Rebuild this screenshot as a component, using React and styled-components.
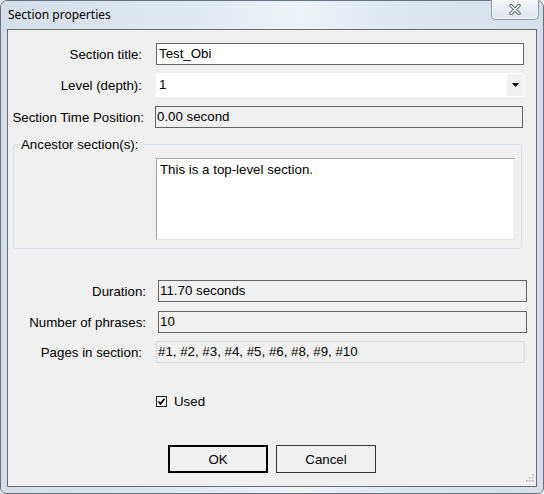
import React from "react";
import styled, { createGlobalStyle } from "styled-components";

const GlobalStyle = createGlobalStyle`
  body {
    margin: 0;
    background: #ffffff;
  }
`;

const Window = styled.div`
  width: 544px;
  height: 494px;
  box-sizing: border-box;
  border: 1px solid #66727e;
  border-radius: 7px 7px 6px 6px;
  background: linear-gradient(90deg, #d3dee9 0%, #e1e9f1 35%, #eef3f8 55%, #dde6ef 75%, #d5e0ea 100%);
  padding: 0 6px 6px;
  display: flex;
  flex-direction: column;
`;

const TitleBar = styled.div`
  height: 28px;
  display: flex;
  justify-content: space-between;
  align-items: flex-start;
  font-family: "Noto Sans", "Liberation Sans", sans-serif;
  font-size: 12px;
  color: #000;
`;

const Title = styled.span`
  margin: 6px 0 0 1px;
  line-height: 16px;
`;

const CloseButton = styled.div`
  width: 48px;
  height: 20px;
  margin: -1px -2px 0 0;
  box-sizing: border-box;
  border: 1px solid #8a99a9;
  border-top: none;
  border-radius: 0 0 5px 5px;
  background: linear-gradient(#f3f6f9, #dfe6ee);
  box-shadow: inset 0 0 0 1px rgba(255, 255, 255, 0.7);
  display: flex;
  align-items: center;
  justify-content: center;
`;

const Client = styled.div`
  flex: 1;
  position: relative;
  border: 1px solid #6b6b6b;
  background: #f0f0f0;
  display: flex;
  flex-direction: column;
  font-family: "Liberation Sans", Arial, sans-serif;
  font-size: 13.3px;
  color: #000;
`;

const Row = styled.div`
  display: grid;
  grid-template-columns: ${(p) => p.$labelW}px auto;
  column-gap: ${(p) => p.$gap}px;
  align-items: center;
  margin-top: ${(p) => p.$top}px;
`;

const Label = styled.span`
  text-align: right;
  white-space: nowrap;
`;

const TextBox = styled.div`
  width: ${(p) => p.$w}px;
  height: 22px;
  box-sizing: border-box;
  border: 1px solid ${(p) => (p.$light ? "#dadada" : "#646464")};
  background: ${(p) => (p.$readonly ? "#f0f0f0" : "#ffffff")};
  padding-left: ${(p) => p.$pad}px;
  line-height: 20px;
  white-space: nowrap;
`;

const Combo = styled.div`
  width: 368px;
  height: 24px;
  box-sizing: border-box;
  border: 1px solid #ffffff;
  background: #ffffff;
  display: flex;
  align-items: stretch;
`;

const ComboText = styled.span`
  flex: 1;
  padding-left: 2px;
  line-height: 22px;
`;

const ComboArrow = styled.div`
  width: 16px;
  background: #f0f0f0;
  display: flex;
  align-items: center;
  justify-content: center;
`;

const Group = styled.fieldset`
  margin: 9px 0 0 5px;
  width: 509px;
  box-sizing: border-box;
  border: 1px solid #d5dfe5;
  border-radius: 3px;
  padding: 0 6px 8px 0;
  min-width: 0;
`;

const Legend = styled.legend`
  margin-left: 6px;
  padding: 0 2px 0 1px;
  line-height: 15px;
`;

const TextArea = styled.div`
  margin: 6px 0 0 142px;
  width: 359px;
  height: 82px;
  box-sizing: border-box;
  border: 1px solid;
  border-color: #a5a5a5 #e2e2e2 #e2e2e2 #a5a5a5;
  background: #ffffff;
  padding: 3px 3px;
  line-height: 15px;
`;

const CheckRow = styled.label`
  display: flex;
  align-items: center;
  gap: 7px;
  margin: 31px 0 0 148px;
  line-height: 15px;
`;

const CheckBox = styled.span`
  width: 11px;
  height: 11px;
  box-sizing: border-box;
  border: 1px solid #222;
  background: #ffffff;
  display: flex;
  align-items: center;
  justify-content: center;
`;

const ButtonRow = styled.div`
  display: flex;
  gap: 8px;
  margin: 36px 0 0 160px;
`;

const Button = styled.div`
  width: 100px;
  height: 28px;
  box-sizing: border-box;
  border: ${(p) => (p.$default ? "2px solid #000" : "1px solid #333")};
  background: #f0f0f0;
  display: flex;
  align-items: center;
  justify-content: center;
`;

const Grip = styled.svg`
  position: absolute;
  right: 2px;
  bottom: 2px;
`;

const CloseIcon = () => (
  <svg width="12" height="11" viewBox="0 0 12 11">
    <path d="M2 1.5 L10 9.5 M10 1.5 L2 9.5" stroke="#5b6675" strokeWidth="3.4" strokeLinecap="round" />
    <path d="M2 1.5 L10 9.5 M10 1.5 L2 9.5" stroke="#ffffff" strokeWidth="1.6" strokeLinecap="round" />
  </svg>
);

const fields = [
  { label: "Duration:", value: "11.70 seconds", labelW: 138, gap: 12, top: 31, pad: 1 },
  { label: "Number of phrases:", value: "10", labelW: 138, gap: 12, top: 9, pad: 1 },
];

export default function App() {
  return (
    <>
      <GlobalStyle />
      <Window>
        <TitleBar>
          <Title>Section properties</Title>
          <CloseButton>
            <CloseIcon />
          </CloseButton>
        </TitleBar>
        <Client>
          <Row $labelW={134} $gap={14} $top={13}>
            <Label>Section title:</Label>
            <TextBox $w={368} $pad={2}>Test_Obi</TextBox>
          </Row>
          <Row $labelW={134} $gap={14} $top={8}>
            <Label>Level (depth):</Label>
            <Combo>
              <ComboText>1</ComboText>
              <ComboArrow>
                <svg width="7" height="4" viewBox="0 0 7 4">
                  <path d="M0 0 H7 L3.5 4 Z" fill="#000" />
                </svg>
              </ComboArrow>
            </Combo>
          </Row>
          <Row $labelW={136} $gap={11} $top={9}>
            <Label>Section Time Position:</Label>
            <TextBox $w={368} $pad={1} $readonly>0.00 second</TextBox>
          </Row>
          <Group>
            <Legend>Ancestor section(s):</Legend>
            <TextArea>This is a top-level section.</TextArea>
          </Group>
          {fields.map((f) => (
            <Row key={f.label} $labelW={f.labelW} $gap={f.gap} $top={f.top}>
              <Label>{f.label}</Label>
              <TextBox $w={369} $pad={f.pad} $readonly>
                {f.value}
              </TextBox>
            </Row>
          ))}
          <Row $labelW={134} $gap={14} $top={8}>
            <Label>Pages in section:</Label>
            <TextBox $w={369} $pad={1} $readonly $light>
              #1, #2, #3, #4, #5, #6, #8, #9, #10
            </TextBox>
          </Row>
          <CheckRow>
            <CheckBox>
              <svg width="9" height="9" viewBox="0 0 9 9">
                <path d="M1.5 4.5 L3.5 6.8 L7.5 1.8" stroke="#000" strokeWidth="1.8" fill="none" />
              </svg>
            </CheckBox>
            Used
          </CheckRow>
          <ButtonRow>
            <Button $default>OK</Button>
            <Button>Cancel</Button>
          </ButtonRow>
          <Grip width="10" height="10" viewBox="0 0 10 10">
            {[
              [8, 0],
              [8, 3],
              [5, 3],
              [8, 6],
              [5, 6],
              [2, 6],
            ].map(([x, y]) => (
              <rect key={`${x}-${y}`} x={x} y={y} width="1.5" height="1.5" fill="#b5b5b5" />
            ))}
          </Grip>
        </Client>
      </Window>
    </>
  );
}
